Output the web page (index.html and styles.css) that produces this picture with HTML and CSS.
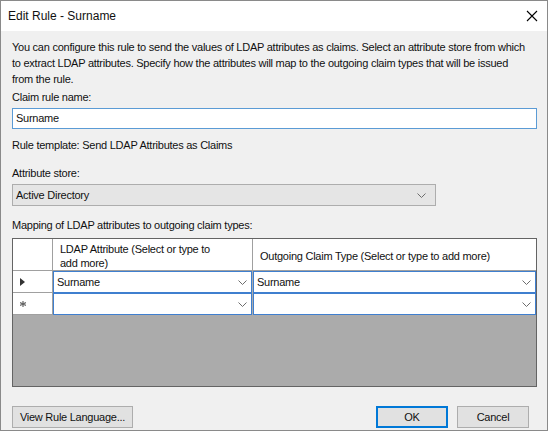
FILE: index.html
```html
<!DOCTYPE html>
<html>
<head>
<meta charset="utf-8">
<link rel="stylesheet" href="styles.css">
</head>
<body>
<div class="window">
  <div class="titlebar">
    <span class="title">Edit Rule - Surname</span>
    <svg class="close" width="12" height="12" viewBox="0 0 12 12"><path d="M1 1 L11 11 M11 1 L1 11" stroke="#000" stroke-width="1.1" fill="none"/></svg>
  </div>
  <div class="content">
    <p class="desc">You can configure this rule to send the values of LDAP attributes as claims. Select an attribute store from which<br>to extract LDAP attributes. Specify how the attributes will map to the outgoing claim types that will be issued<br>from the rule.</p>
    <div class="label l-name">Claim rule name:</div>
    <div class="textbox">Surname</div>
    <div class="label l-tpl">Rule template: Send LDAP Attributes as Claims</div>
    <div class="label l-store">Attribute store:</div>
    <div class="combo">
      <span>Active Directory</span>
      <svg class="chev" width="9" height="5" viewBox="0 0 9 5"><path d="M0.5 0.5 L4.5 4.5 L8.5 0.5" stroke="#6d6d6d" stroke-width="1" fill="none"/></svg>
    </div>
    <div class="label l-map">Mapping of LDAP attributes to outgoing claim types:</div>
    <div class="grid">
      <div class="hdr rowhdr"></div>
      <div class="hdr">LDAP Attribute (Select or type to<br>add more)</div>
      <div class="hdr last">Outgoing Claim Type (Select or type to add more)</div>

      <div class="rh"><svg width="5" height="8" viewBox="0 0 5 8"><path d="M0 0 L5 4 L0 8 Z" fill="#333"/></svg></div>
      <div class="cell"><span>Surname</span><svg class="chev" width="9" height="5" viewBox="0 0 9 5"><path d="M0.5 0.5 L4.5 4.5 L8.5 0.5" stroke="#6d6d6d" stroke-width="1" fill="none"/></svg></div>
      <div class="cell"><span>Surname</span><svg class="chev" width="9" height="5" viewBox="0 0 9 5"><path d="M0.5 0.5 L4.5 4.5 L8.5 0.5" stroke="#6d6d6d" stroke-width="1" fill="none"/></svg></div>

      <div class="rh"><svg width="6" height="6" viewBox="0 0 6 6"><path d="M3 0 V6 M0 1.5 L6 4.5 M6 1.5 L0 4.5" stroke="#666" stroke-width="1.2"/></svg></div>
      <div class="cell"><span></span><svg class="chev" width="9" height="5" viewBox="0 0 9 5"><path d="M0.5 0.5 L4.5 4.5 L8.5 0.5" stroke="#6d6d6d" stroke-width="1" fill="none"/></svg></div>
      <div class="cell"><span></span><svg class="chev" width="9" height="5" viewBox="0 0 9 5"><path d="M0.5 0.5 L4.5 4.5 L8.5 0.5" stroke="#6d6d6d" stroke-width="1" fill="none"/></svg></div>

      <div class="empty"></div>
    </div>
    <div class="buttons">
      <button class="btn btn-view">View Rule Language...</button>
      <div class="spacer"></div>
      <button class="btn btn-ok">OK</button>
      <button class="btn btn-cancel">Cancel</button>
    </div>
  </div>
</div>
</body>
</html>
```
FILE: styles.css
```css
html, body {
  margin: 0;
  padding: 0;
  background: #ffffff;
}
body {
  font-family: "Liberation Sans", Arial, sans-serif;
  font-size: 11px;
  letter-spacing: -0.25px;
  color: #111;
}
.window {
  width: 548px;
  height: 431px;
  box-sizing: border-box;
  border: 1px solid #8a8a8a;
  background: #f0f0f0;
  display: flex;
  flex-direction: column;
}
.titlebar {
  height: 30px;
  background: #ffffff;
  display: flex;
  align-items: center;
  padding: 0 9px 0 7px;
}
.title {
  font-size: 12px;
  letter-spacing: 0;
  flex: 1;
}
.close {
  display: block;
}
.content {
  padding: 0 10px 0 11px;
  display: flex;
  flex-direction: column;
}
.desc {
  margin: 8px 0 0 0;
  line-height: 16px;
  white-space: nowrap;
}
.label {
  line-height: 16px;
}
.l-name { margin-top: 2px; }
.textbox {
  margin-top: 3px;
  height: 21px;
  box-sizing: border-box;
  border: 1px solid #5b9bd5;
  background: #fff;
  padding-left: 3px;
  line-height: 19px;
}
.l-tpl { margin-top: 8px; }
.l-store { margin-top: 12px; }
.combo {
  margin-top: 3px;
  width: 424px;
  height: 22px;
  box-sizing: border-box;
  border: 1px solid #adadad;
  background: #e5e5e5;
  display: flex;
  align-items: center;
  padding: 0 9px 0 3px;
}
.combo span { flex: 1; }
.l-map { margin-top: 11px; }
.grid {
  margin-top: 5px;
  height: 149px;
  box-sizing: border-box;
  border: 1px solid #646464;
  background: #ababab;
  display: grid;
  grid-template-columns: 40px 200px 1fr;
  grid-template-rows: 32px 22px 22px 1fr;
}
.hdr {
  background: #fff;
  border-right: 1px solid #a0a0a0;
  border-bottom: 1px solid #a0a0a0;
  padding: 3px 0 0 7px;
  line-height: 14px;
  display: flex;
  align-items: center;
  white-space: nowrap;
}
.hdr.last { border-right: none; }
.rh {
  background: #fff;
  border-right: 1px solid #a0a0a0;
  border-bottom: 1px solid #a0a0a0;
  display: flex;
  align-items: center;
  padding-left: 7px;
}
.cell {
  background: #fff;
  border: 1px solid #3f7fcf;
  display: flex;
  align-items: center;
  padding: 0 4px 0 3px;
  margin-right: 1px;
}
.cell:nth-child(3n) { margin-right: 0; }
.cell span { flex: 1; }
.empty {
  grid-column: 1 / 4;
}
.buttons {
  margin-top: 19px;
  display: flex;
  gap: 9px;
}
.spacer { flex: 1; }
.btn {
  font-family: "Liberation Sans", Arial, sans-serif;
  font-size: 11px;
  letter-spacing: -0.25px;
  color: #111;
  height: 22px;
  box-sizing: border-box;
  background: #e1e1e1;
  border: 1px solid #adadad;
  padding: 0;
}
.btn-view { width: 121px; }
.btn-ok { width: 72px; border: 2px solid #0078d7; }
.btn-cancel { width: 72px; margin-right: 8px; }
```
